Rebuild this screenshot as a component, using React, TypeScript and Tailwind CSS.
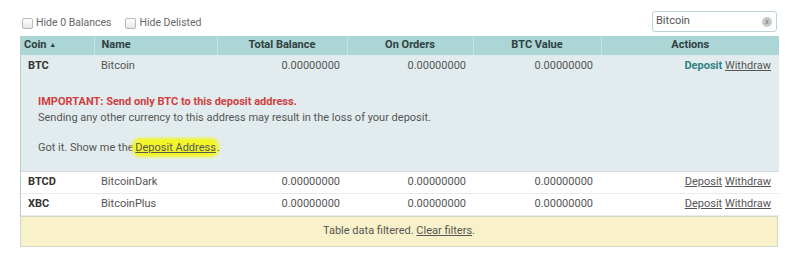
import { useState } from 'react';

type Coin = {
  code: string
  name: string
  total: string
  orders: string
  btc: string
};

const coins: Coin[] = [
  { code: 'BTC', name: 'Bitcoin', total: '0.00000000', orders: '0.00000000', btc: '0.00000000' },
  { code: 'BTCD', name: 'BitcoinDark', total: '0.00000000', orders: '0.00000000', btc: '0.00000000' },
  { code: 'XBC', name: 'BitcoinPlus', total: '0.00000000', orders: '0.00000000', btc: '0.00000000' },
];

const Check = ({ label }: { label: string }) => (
  <label className="flex items-center gap-[3px] text-[10.5px] text-[#666]">
    <span className="w-[11px] h-[11px] rounded-[2px] border border-[#b8b8b8] bg-gradient-to-b from-white to-[#e6e6e6]" />
    {label}
  </label>
);

const App = () => {
  const [search, setSearch] = useState('Bitcoin');
  const open = 'BTC';

  return (
    <div className="w-[800px] h-[257px] bg-white font-['Roboto',sans-serif] text-[#555]">
      <div className="flex items-center justify-between pl-[22px] pr-[23px] pt-[11px] h-[36px] pb-[4px]">
        <div className="flex items-center gap-[14px] mt-[3px]">
          <Check label="Hide 0 Balances" />
          <Check label="Hide Delisted" />
        </div>
        <div className="relative flex items-center w-[125px] h-[21px] border border-[#b9d3d6] rounded-[3px] bg-white">
          <input
            value={search}
            onChange={(e) => setSearch(e.target.value)}
            className="w-full pl-[3px] pr-[16px] text-[11px] text-[#555] outline-none bg-transparent"
          />
          <span className="absolute right-[4px] top-[5px] w-[10px] h-[10px] rounded-full bg-[#c8c8c8] text-[7px] leading-[10px] text-center text-[#777]">x</span>
        </div>
      </div>

      <div className="mx-[20px] w-[758px] border-l border-r border-[#b8cccc]">
        <table className="w-full table-fixed border-collapse text-[11px]">
          <colgroup>
            <col className="w-[73px]" />
            <col className="w-[123px]" />
            <col className="w-[130px]" />
            <col className="w-[126px]" />
            <col className="w-[128px]" />
            <col className="w-[178px]" />
          </colgroup>
          <thead>
            <tr className="h-[19px] bg-[#acd5d6] text-[#2f4040] font-bold">
              <th className="text-left pl-[3px]">Coin <span className="text-[7px] align-[1px]">▲</span></th>
              <th className="text-left pl-[7px] border-l border-[#c6e3e3]">Name</th>
              <th className="border-l border-[#c6e3e3]">Total Balance</th>
              <th className="border-l border-[#c6e3e3]">On Orders</th>
              <th className="border-l border-[#c6e3e3]">BTC Value</th>
              <th className="border-l border-[#c6e3e3]">Actions</th>
            </tr>
          </thead>
          <tbody>
            {coins.map((c) => {
              const isOpen = c.code === open;
              return [
                <tr key={c.code} className={`h-[22px] border-b ${isOpen ? 'bg-[#e2ecee] border-transparent' : 'bg-white border-[#e6ecec]'}`}>
                  <td className="pl-[7px] font-bold text-[#333]">{c.code}</td>
                  <td className="pl-[7px]">{c.name}</td>
                  <td className="text-right pr-[7px]">{c.total}</td>
                  <td className="text-right pr-[7px]">{c.orders}</td>
                  <td className="text-right pr-[8px]">{c.btc}</td>
                  <td className="text-right pr-[8px]">
                    {isOpen
                      ? <span className="font-bold text-[#2f7f86]">Deposit</span>
                      : <span className="underline">Deposit</span>}
                    {' '}
                    <span className="underline">Withdraw</span>
                  </td>
                </tr>,
                isOpen && (
                  <tr key={`${c.code}-info`} className="bg-[#e2ecee] border-b border-[#d4dede]">
                    <td colSpan={6} className="pl-[17px] pt-[16px] pb-[15px] leading-[16px]">
                      <p className="font-bold text-[#d04040]">IMPORTANT: Send only BTC to this deposit address.</p>
                      <p>Sending any other currency to this address may result in the loss of your deposit.</p>
                      <p className="mt-[14px]">
                        Got it. Show me the
                        {' '}
                        <span className="bg-[#f2f52a] rounded-[6px] px-[1px] -ml-[2px] py-[1px] shadow-[0_0_3px_2px_#f2f52a] underline">Deposit Address</span>
                        .
                      </p>
                    </td>
                  </tr>
                ),
              ];
            })}
          </tbody>
        </table>
        <div className="h-[31px] flex items-center justify-center bg-[#f9f1c9] border border-[#cfd8c4] -mx-[1px] text-[11px]">
          Table data filtered.&nbsp;<span className="underline">Clear filters</span>.
        </div>
      </div>
    </div>
  );
};

export default App;
